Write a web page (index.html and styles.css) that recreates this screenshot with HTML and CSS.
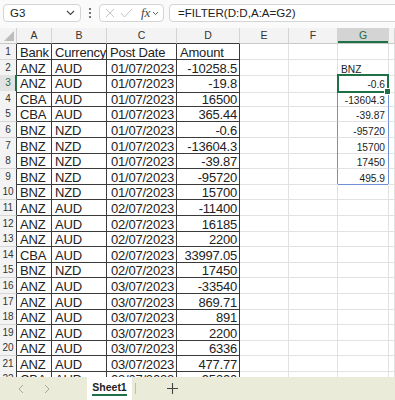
FILE: index.html
```html
<!DOCTYPE html>
<html lang="en">
<head>
    <meta charset="UTF-8">
    <meta name="viewport" content="width=device-width, initial-scale=1.0">
    <title>Sheet1</title>
    <link rel="stylesheet" href="styles.css">
</head>
<body>
<div class="app">
    <!-- Barra de fórmula -->
    <div class="formula-bar">
        <div class="name-box">
            <span>G3</span>
            <svg width="9" height="6" viewBox="0 0 9 6"><path d="M1 1 L4.5 4.5 L8 1" fill="none" stroke="#444" stroke-width="1.1"/></svg>
        </div>
        <svg class="dots" width="4" height="12" viewBox="0 0 4 12"><circle cx="2" cy="2" r="1.1" fill="#555"/><circle cx="2" cy="6" r="1.1" fill="#555"/><circle cx="2" cy="10" r="1.1" fill="#555"/></svg>
        <div class="fx-box">
            <svg width="10" height="10" viewBox="0 0 10 10"><path d="M1 1 L9 9 M9 1 L1 9" stroke="#c4c4c4" stroke-width="1"/></svg>
            <svg class="check" width="13" height="10" viewBox="0 0 13 10"><path d="M1 5 L4.5 9 L12 1" fill="none" stroke="#c4c4c4" stroke-width="1"/></svg>
            <span class="fx">fx</span>
            <svg width="7" height="5" viewBox="0 0 7 5"><path d="M1 1 L3.5 3.5 L6 1" fill="none" stroke="#666" stroke-width="1"/></svg>
        </div>
        <div class="formula">=FILTER(D:D,A:A=G2)</div>
    </div>

    <!-- Grade da planilha -->
    <div class="sheet">
        <div class="row head">
            <div class="corner"><svg width="10" height="10" viewBox="0 0 10 10"><polygon points="10,0 10,10 0,10" fill="#bdbdbd"/></svg></div>
            <div class="ch dk">A</div><div class="ch dk">B</div><div class="ch dk">C</div><div class="ch dk">D</div>
            <div class="ch">E</div><div class="ch">F</div><div class="ch on">G</div><div class="ch"></div>
        </div>

        <div class="row"><div class="rh">1</div><div class="c d">Bank</div><div class="c d">Currency</div><div class="c d">Post Date</div><div class="c d">Amount</div><div class="c"></div><div class="c"></div><div class="c"></div><div class="c"></div></div>
        <div class="row"><div class="rh">2</div><div class="c d">ANZ</div><div class="c d">AUD</div><div class="c d n">01/07/2023</div><div class="c d n">-10258.5</div><div class="c"></div><div class="c"></div><div class="c g">BNZ</div><div class="c"></div></div>
        <div class="row"><div class="rh on">3</div><div class="c d">ANZ</div><div class="c d">AUD</div><div class="c d n">01/07/2023</div><div class="c d n">-19.8</div><div class="c"></div><div class="c sl"></div><div class="c g n sp sel">-0.6</div><div class="c"></div></div>
        <div class="row"><div class="rh">4</div><div class="c d">CBA</div><div class="c d">AUD</div><div class="c d n">01/07/2023</div><div class="c d n">16500</div><div class="c"></div><div class="c sl"></div><div class="c g n sp">-13604.3</div><div class="c"></div></div>
        <div class="row"><div class="rh">5</div><div class="c d">CBA</div><div class="c d">AUD</div><div class="c d n">01/07/2023</div><div class="c d n">365.44</div><div class="c"></div><div class="c sl"></div><div class="c g n sp">-39.87</div><div class="c"></div></div>
        <div class="row"><div class="rh">6</div><div class="c d">BNZ</div><div class="c d">NZD</div><div class="c d n">01/07/2023</div><div class="c d n">-0.6</div><div class="c"></div><div class="c sl"></div><div class="c g n sp">-95720</div><div class="c"></div></div>
        <div class="row"><div class="rh">7</div><div class="c d">BNZ</div><div class="c d">NZD</div><div class="c d n">01/07/2023</div><div class="c d n">-13604.3</div><div class="c"></div><div class="c sl"></div><div class="c g n sp">15700</div><div class="c"></div></div>
        <div class="row"><div class="rh">8</div><div class="c d">BNZ</div><div class="c d">NZD</div><div class="c d n">01/07/2023</div><div class="c d n">-39.87</div><div class="c"></div><div class="c sl"></div><div class="c g n sp">17450</div><div class="c"></div></div>
        <div class="row"><div class="rh">9</div><div class="c d">BNZ</div><div class="c d">NZD</div><div class="c d n">01/07/2023</div><div class="c d n">-95720</div><div class="c"></div><div class="c sl"></div><div class="c g n sp last">495.9</div><div class="c"></div></div>
        <div class="row"><div class="rh">10</div><div class="c d">BNZ</div><div class="c d">NZD</div><div class="c d n">01/07/2023</div><div class="c d n">15700</div><div class="c"></div><div class="c"></div><div class="c"></div><div class="c"></div></div>
        <div class="row"><div class="rh">11</div><div class="c d">ANZ</div><div class="c d">AUD</div><div class="c d n">02/07/2023</div><div class="c d n">-11400</div><div class="c"></div><div class="c"></div><div class="c"></div><div class="c"></div></div>
        <div class="row"><div class="rh">12</div><div class="c d">ANZ</div><div class="c d">AUD</div><div class="c d n">02/07/2023</div><div class="c d n">16185</div><div class="c"></div><div class="c"></div><div class="c"></div><div class="c"></div></div>
        <div class="row"><div class="rh">13</div><div class="c d">ANZ</div><div class="c d">AUD</div><div class="c d n">02/07/2023</div><div class="c d n">2200</div><div class="c"></div><div class="c"></div><div class="c"></div><div class="c"></div></div>
        <div class="row"><div class="rh">14</div><div class="c d">CBA</div><div class="c d">AUD</div><div class="c d n">02/07/2023</div><div class="c d n">33997.05</div><div class="c"></div><div class="c"></div><div class="c"></div><div class="c"></div></div>
        <div class="row"><div class="rh">15</div><div class="c d">BNZ</div><div class="c d">NZD</div><div class="c d n">02/07/2023</div><div class="c d n">17450</div><div class="c"></div><div class="c"></div><div class="c"></div><div class="c"></div></div>
        <div class="row"><div class="rh">16</div><div class="c d">ANZ</div><div class="c d">AUD</div><div class="c d n">03/07/2023</div><div class="c d n">-33540</div><div class="c"></div><div class="c"></div><div class="c"></div><div class="c"></div></div>
        <div class="row"><div class="rh">17</div><div class="c d">ANZ</div><div class="c d">AUD</div><div class="c d n">03/07/2023</div><div class="c d n">869.71</div><div class="c"></div><div class="c"></div><div class="c"></div><div class="c"></div></div>
        <div class="row"><div class="rh">18</div><div class="c d">ANZ</div><div class="c d">AUD</div><div class="c d n">03/07/2023</div><div class="c d n">891</div><div class="c"></div><div class="c"></div><div class="c"></div><div class="c"></div></div>
        <div class="row"><div class="rh">19</div><div class="c d">ANZ</div><div class="c d">AUD</div><div class="c d n">03/07/2023</div><div class="c d n">2200</div><div class="c"></div><div class="c"></div><div class="c"></div><div class="c"></div></div>
        <div class="row"><div class="rh">20</div><div class="c d">ANZ</div><div class="c d">AUD</div><div class="c d n">03/07/2023</div><div class="c d n">6336</div><div class="c"></div><div class="c"></div><div class="c"></div><div class="c"></div></div>
        <div class="row"><div class="rh">21</div><div class="c d">ANZ</div><div class="c d">AUD</div><div class="c d n">03/07/2023</div><div class="c d n">477.77</div><div class="c"></div><div class="c"></div><div class="c"></div><div class="c"></div></div>
        <div class="row"><div class="rh">22</div><div class="c d">CBA</div><div class="c d">AUD</div><div class="c d n">03/07/2023</div><div class="c d n">95200</div><div class="c"></div><div class="c"></div><div class="c"></div><div class="c"></div></div>
    </div>

    <!-- Abas -->
    <div class="tabs">
        <div class="nav"><svg width="6" height="10" viewBox="0 0 6 10"><path d="M5 1 L1 5 L5 9" fill="none" stroke="#a8a8a8" stroke-width="1"/></svg></div>
        <div class="nav"><svg width="6" height="10" viewBox="0 0 6 10"><path d="M1 1 L5 5 L1 9" fill="none" stroke="#a8a8a8" stroke-width="1"/></svg></div>
        <div class="tab"><span>Sheet1</span></div>
        <div class="sep"></div>
        <div class="add"><svg width="11" height="11" viewBox="0 0 11 11"><path d="M5.5 0 V11 M0 5.5 H11" stroke="#444" stroke-width="1.1"/></svg></div>
    </div>
</div>
</body>
</html>
```

FILE: styles.css
```css
/* Base */
* {
    box-sizing: border-box;
}

body {
    margin: 0;
    font-family: "Liberation Sans", Arial, sans-serif;
    background-color: #fff;
    color: #222;
    overflow: hidden;
}

.app {
    width: 395px;
    height: 400px;
    display: flex;
    flex-direction: column;
    overflow: hidden;
}

/* Barra de fórmula */
.formula-bar {
    flex: none;
    height: 28px;
    display: flex;
    align-items: flex-start;
    padding: 4px 0 0 3px;
    background-color: #fafafa;
}

.name-box {
    width: 78px;
    height: 18px;
    display: flex;
    align-items: center;
    justify-content: space-between;
    padding: 0 5px 0 6px;
    background-color: #fff;
    border: 1px solid #d4d4d4;
    border-radius: 4px;
    font-size: 11.5px;
    color: #222;
}

.dots {
    margin: 3px 0 0 7px;
}

.fx-box {
    width: 65px;
    height: 18px;
    margin-left: 7px;
    display: flex;
    align-items: center;
    padding: 0 3px 0 5px;
    background-color: #fff;
    border: 1px solid #d4d4d4;
    border-radius: 4px;
}

.fx-box .check {
    margin-left: 5px;
}

.fx {
    font-family: "Liberation Serif", serif;
    font-style: italic;
    font-size: 13px;
    color: #444;
    margin: 0 2px 0 8px;
    line-height: 14px;
}

.formula {
    flex: 1;
    height: 18px;
    margin-left: 5px;
    margin-right: -6px;
    padding-left: 8px;
    background-color: #fff;
    border: 1px solid #d4d4d4;
    border-radius: 4px;
    font-size: 11.6px;
    line-height: 16px;
    color: #222;
    white-space: nowrap;
}

/* Planilha */
.sheet {
    flex: 1;
    overflow: hidden;
    background-color: #fff;
}

.row {
    display: grid;
    grid-template-columns: 17px 35px 55px 70px 63px 49px 49px 51px 1fr;
    height: 15.6px;
}

.row.head {
    height: 16px;
}

.corner {
    display: flex;
    align-items: flex-end;
    justify-content: flex-end;
    padding: 0 2px 2px 0;
    background-color: #f3f3f3;
    border-right: 1px solid #d0d0d0;
    border-bottom: 1px solid #c8c8c8;
}

.ch {
    background-color: #f3f3f3;
    border-right: 1px solid #d4d4d4;
    border-bottom: 1px solid #c8c8c8;
    font-size: 10.5px;
    line-height: 15px;
    text-align: center;
    color: #333;
}

.ch.dk {
    border-bottom-color: #3a3a3a;
}

.ch.on {
    background-color: #d4d4d4;
    color: #1c6b3c;
    box-shadow: inset 0 -2px #1e7145;
}

.rh {
    background-color: #f3f3f3;
    border-right: 1px solid #3a3a3a;
    border-bottom: 1px solid #d6d6d6;
    font-size: 10px;
    line-height: 15px;
    text-align: center;
    color: #333;
}

.rh.on {
    color: #1e7145;
    border-right-color: #1e7145;
    box-shadow: inset -1px 0 #1e7145;
    background-color: #e2e2e2;
}

.c {
    border-right: 1px solid #e2e2e2;
    border-bottom: 1px solid #e2e2e2;
    font-size: 13px;
    line-height: 15px;
    padding: 1px 2px 0 3px;
    white-space: nowrap;
    overflow: hidden;
}

/* Células com borda (intervalo A:D) */
.c.d {
    border-right-color: #3a3a3a;
    border-bottom-color: #3a3a3a;
    letter-spacing: -0.2px;
}

.c.n {
    text-align: right;
}

/* Coluna G com fonte menor */
.c.g {
    font-size: 10.2px;
    padding-top: 2px;
    padding-right: 3px;
}

/* Intervalo de despejo (spill) */
.c.sl {
    border-right-color: #6f8fd6;
}

.c.sp {
    border-right-color: #6f8fd6;
}

.c.sp.last {
    border-bottom-color: #6f8fd6;
}

/* Célula selecionada */
.c.sel {
    position: relative;
    overflow: visible;
}

.c.sel::before {
    content: "";
    position: absolute;
    left: -1px;
    top: -1px;
    right: -1px;
    bottom: -1px;
    border: 2px solid #1e7145;
}

.c.sel::after {
    content: "";
    position: absolute;
    right: -3px;
    bottom: -3px;
    width: 5px;
    height: 5px;
    background-color: #1e7145;
    border: 1px solid #fff;
}

/* Abas */
.tabs {
    flex: none;
    height: 23px;
    display: flex;
    align-items: stretch;
    padding-left: 8px;
    background-color: #ebebda;
}

.nav {
    width: 26px;
    display: flex;
    align-items: center;
    justify-content: center;
}

.tab {
    width: 45px;
    margin-left: 27px;
    display: flex;
    justify-content: center;
    padding-top: 4px;
    background-color: #fff;
}

.tab span {
    height: 15px;
    font-size: 10.5px;
    font-weight: bold;
    line-height: 12px;
    padding-bottom: 1px;
    color: #222;
    border-bottom: 2px solid #1e7145;
}

.sep {
    width: 1px;
    height: 11px;
    margin: 6px 0 0 3px;
    background-color: #bdbdbd;
}

.add {
    width: 24px;
    margin-left: 24px;
    display: flex;
    align-items: center;
    justify-content: center;
}
```
